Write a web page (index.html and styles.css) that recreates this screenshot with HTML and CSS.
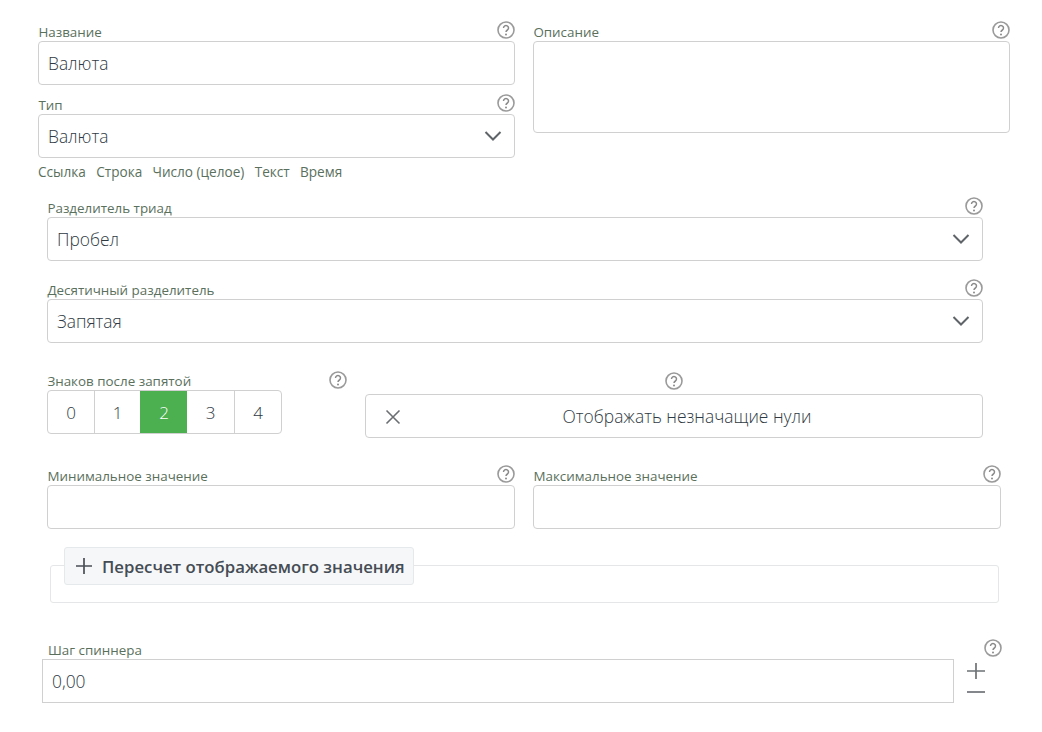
FILE: index.html
```html
<!DOCTYPE html>
<html lang="ru">
<head>
<meta charset="utf-8">
<title>Валюта</title>
<link rel="stylesheet" href="styles.css">
</head>
<body>
<svg class="defs" width="0" height="0" aria-hidden="true">
  <symbol id="help" viewBox="0 0 18 18">
    <circle cx="9" cy="9" r="8" fill="none" stroke="#9a9a9a" stroke-width="1.6"/>
    <path d="M6.5 7a2.5 2.4 0 1 1 3.9 2c-.9.6-1.4 1-1.4 2.1" fill="none" stroke="#8a8a8a" stroke-width="1.5"/>
    <circle cx="9" cy="13.5" r="1" fill="#8a8a8a"/>
  </symbol>
  <symbol id="chev" viewBox="0 0 18 12">
    <path d="M1.5 2l7.5 7.5L16.5 2" fill="none" stroke="#5f6468" stroke-width="2"/>
  </symbol>
</svg>
<main class="page">
  <section class="top">
    <div class="col">
      <div class="head"><label class="lbl">Название</label><svg class="hlp"><use href="#help"/></svg></div>
      <div class="box">Валюта</div>
      <div class="head head-next"><label class="lbl">Тип</label><svg class="hlp"><use href="#help"/></svg></div>
      <div class="box select">Валюта<svg class="chev"><use href="#chev"/></svg></div>
      <div class="links"><span>Ссылка</span><span>Строка</span><span>Число (целое)</span><span>Текст</span><span>Время</span></div>
    </div>
    <div class="col">
      <div class="head"><label class="lbl">Описание</label><svg class="hlp"><use href="#help"/></svg></div>
      <div class="box area"></div>
    </div>
  </section>

  <section class="wide first">
    <div class="head"><label class="lbl">Разделитель триад</label><svg class="hlp"><use href="#help"/></svg></div>
    <div class="box select">Пробел<svg class="chev"><use href="#chev"/></svg></div>
  </section>
  <section class="wide second">
    <div class="head"><label class="lbl">Десятичный разделитель</label><svg class="hlp"><use href="#help"/></svg></div>
    <div class="box select">Запятая<svg class="chev"><use href="#chev"/></svg></div>
  </section>

  <section class="digits">
    <div class="digits-left">
      <div class="head"><label class="lbl">Знаков после запятой</label><svg class="hlp"><use href="#help"/></svg></div>
      <div class="seg">
        <span>0</span><span>1</span><span class="on">2</span><span>3</span><span>4</span>
      </div>
    </div>
    <div class="digits-right">
      <svg class="hlp"><use href="#help"/></svg>
      <div class="box toggle">
        <svg class="x" viewBox="0 0 16 16"><path d="M1.5 1.5l13 13M14.5 1.5l-13 13" fill="none" stroke="#6b6f72" stroke-width="1.6"/></svg>
        <span>Отображать незначащие нули</span>
      </div>
    </div>
  </section>

  <section class="minmax">
    <div class="col">
      <div class="head"><label class="lbl">Минимальное значение</label><svg class="hlp"><use href="#help"/></svg></div>
      <div class="box"></div>
    </div>
    <div class="col">
      <div class="head"><label class="lbl">Максимальное значение</label><svg class="hlp"><use href="#help"/></svg></div>
      <div class="box"></div>
    </div>
  </section>

  <section class="group">
    <div class="group-btn">
      <svg class="plus" viewBox="0 0 18 18"><path d="M9 1v16M1 9h16" fill="none" stroke="#4a4f55" stroke-width="1.7"/></svg>
      <span>Пересчет отображаемого значения</span>
    </div>
  </section>

  <section class="spin">
    <div class="head"><label class="lbl spin-lbl">Шаг спиннера</label><svg class="hlp"><use href="#help"/></svg></div>
    <div class="spin-row">
      <div class="box spin-box">0,00</div>
      <div class="spin-btns">
        <svg class="pm" viewBox="0 0 18 18"><path d="M9 1v16M0 9h18" fill="none" stroke="#6e7276" stroke-width="1.7"/></svg>
        <svg class="pm minus" viewBox="0 0 18 4"><path d="M0 2h18" fill="none" stroke="#6e7276" stroke-width="1.7"/></svg>
      </div>
    </div>
  </section>
</main>
</body>
</html>
```
FILE: styles.css
```css
* { box-sizing: border-box; }
html, body { margin: 0; padding: 0; background: #fff; }
body {
  font-family: "Open Sans", "Liberation Sans", sans-serif;
  color: #454f59;
  width: 1042px;
  height: 732px;
  overflow: hidden;
}
.defs { position: absolute; }
.page { padding: 21px 0 0 38px; }

.head {
  display: flex;
  justify-content: space-between;
  align-items: flex-start;
  height: 20px;
}
.head-next { margin-top: 9px; }
.lbl {
  font-size: 13.4px;
  line-height: 18px;
  margin: 2px 0 0 0.4px;
  color: #5a705d;
}
.hlp { width: 18px; height: 18px; flex: none; display: block; }

.box {
  height: 44px;
  border: 1px solid #d0d0d0;
  border-radius: 4px;
  padding: 0 9px;
  display: flex;
  align-items: center;
  font-size: 17.4px;
  font-weight: 300;
  line-height: 24px;
  color: #2f3943;
  background: #fff;
}
.area { height: 92px; }
.select { justify-content: space-between; padding-right: 12px; }
.chev { width: 18px; height: 12px; display: block; }

.top {
  display: grid;
  grid-template-columns: 477px 477px;
  column-gap: 18px;
}
.links {
  display: flex;
  gap: 10.3px;
  margin-top: 5px;
  font-size: 13.6px;
  line-height: 18px;
  color: #5a705d;
}

.wide { width: 936px; margin-left: 9px; }
.first { margin-top: 16px; }
.second { margin-top: 18px; }

.digits {
  display: flex;
  margin: 28px 0 0 9px;
  width: 936px;
  gap: 18px;
}
.digits-left { width: 300px; flex: none; }
.digits-left .head { height: 19px; }
.digits-left .lbl { margin-top: 1px; }
.digits-right {
  flex: 1;
  display: flex;
  flex-direction: column;
  align-items: center;
}
.digits-right .hlp { margin-top: 1px; margin-bottom: 4px; }
.seg {
  display: grid;
  grid-template-columns: 46px 46px 47px 47px 47px;
  width: 235px;
  height: 44px;
  border: 1px solid #d0d0d0;
  border-radius: 4px;
  overflow: hidden;
}
.seg span {
  display: flex;
  align-items: center;
  justify-content: center;
  font-size: 17px;
  font-weight: 300;
  color: #2f3943;
  border-left: 1px solid #d0d0d0;
}
.seg span:first-child { border-left: 0; }
.seg .on { background: #4caf50; color: #fff; border-left-color: #4caf50; }
.seg .on + span { border-left: 0; }
.toggle { width: 100%; padding: 0 19px; position: relative; justify-content: center; }
.x { width: 16px; height: 16px; position: absolute; left: 19px; top: 14px; }
.toggle span { margin-left: 26px; }

.minmax {
  display: flex;
  gap: 18px;
  margin: 27px 0 0 9px;
}
.minmax .col { width: 468px; }

.group {
  position: relative;
  width: 949px;
  height: 38px;
  margin: 36px 0 0 12px;
  border: 1px solid #e4e6e8;
  border-radius: 3px;
}
.group-btn {
  position: absolute;
  top: -19px;
  left: 13px;
  width: 350px;
  height: 38px;
  display: flex;
  align-items: center;
  gap: 9px;
  padding-left: 10px;
  background: #f5f7f9;
  border: 1px solid #e6e9ec;
  border-radius: 3px;
  font-size: 16.75px;
  font-weight: 600;
  color: #454c54;
}
.plus { width: 18px; height: 18px; flex: none; }

.spin { width: 960px; margin: 36px 0 0 4px; }
.spin-lbl { margin-left: 6px; }
.spin-row { display: flex; }
.spin-box { width: 912px; border-radius: 0; }
.spin-btns {
  display: flex;
  flex-direction: column;
  align-items: center;
  width: 44px;
}
.pm { width: 18px; height: 18px; margin-top: 3px; display: block; }
.minus { height: 4px; margin-top: 10px; }
```
